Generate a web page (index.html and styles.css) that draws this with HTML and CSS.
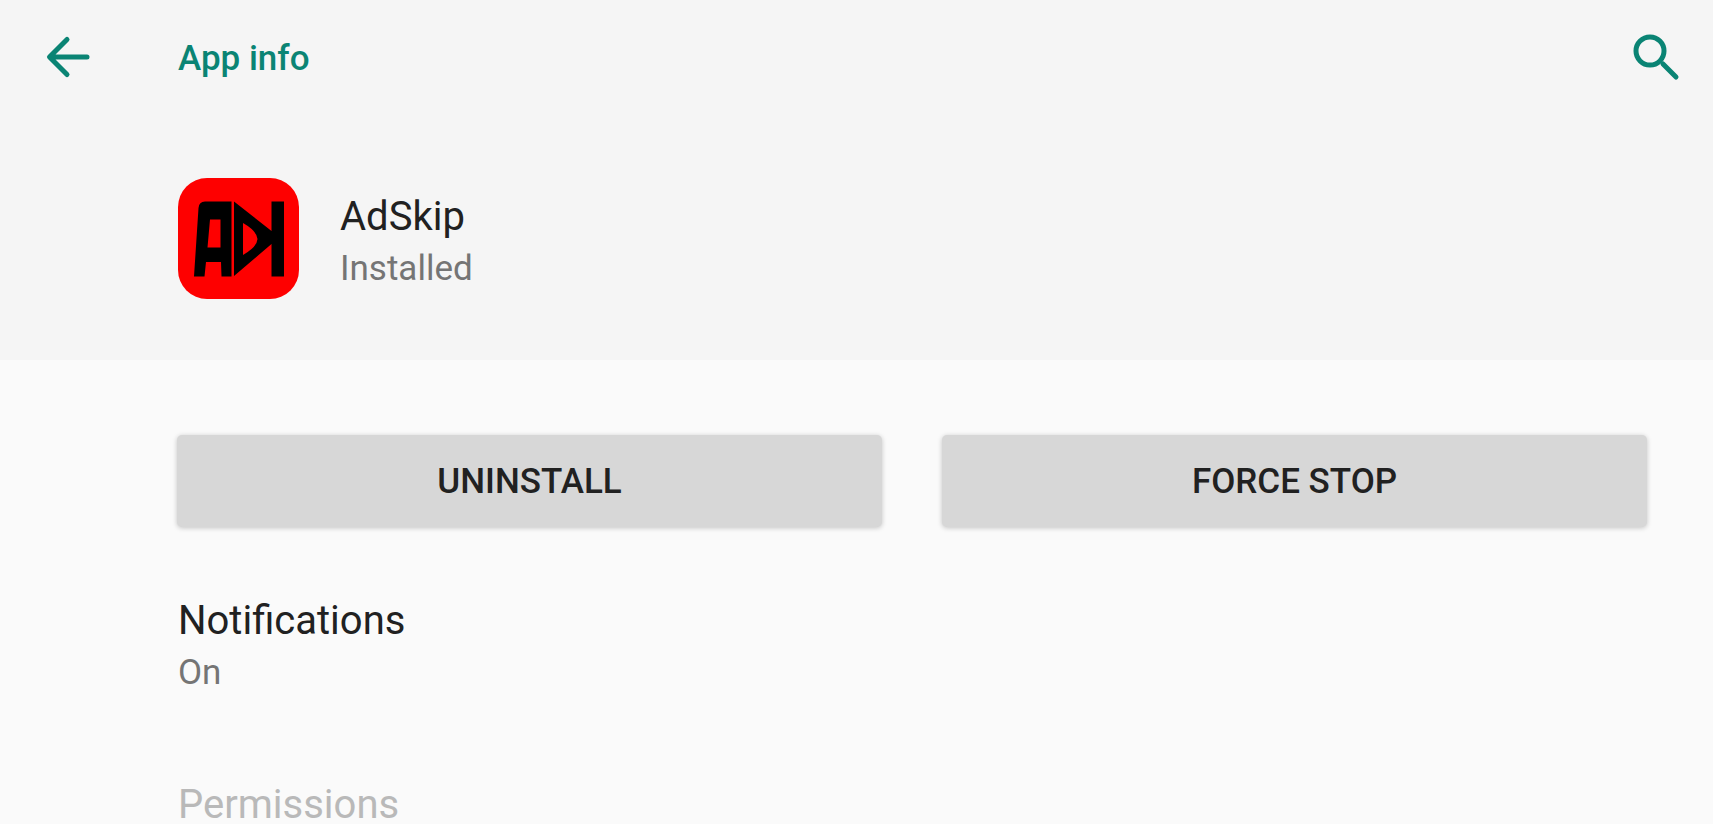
FILE: index.html
```
<!DOCTYPE html>
<html lang="en">
<head>
    <meta charset="UTF-8">
    <meta name="viewport" content="width=device-width, initial-scale=1">
    <title>App info</title>
    <link rel="stylesheet" href="styles.css">
</head>
<body>
<header class="header">
    <div class="toolbar">
        <button class="icon-btn back" type="button" aria-label="Back">
            <svg width="48" height="48" viewBox="0 0 48 48">
                <path d="M23 5.500L5.500 23L23 40.500M6 23H43" />
            </svg>
        </button>
        <h1 class="toolbar-title">App info</h1>
        <button class="icon-btn search" type="button" aria-label="Search">
            <svg width="48" height="48" viewBox="0 0 48 48">
                <circle cx="17" cy="17" r="14" />
                <path d="M30 30L43 43" />
            </svg>
        </button>
    </div>
    <div class="app">
        <svg class="app-logo" viewBox="0 0 121 121" role="img" aria-label="AdSkip logo">
            <rect width="121" height="121" rx="29" fill="#fe0000" />
            <path fill="#000" fill-rule="evenodd" d="M27 23.500H53.500V98.500H43.500L43 84H28L26.500 98.500H16L20.500 30Q21 23.500 27 23.500ZM32 41.500L29.500 69.500H42.500V41.500Z" />
            <path fill="#000" fill-rule="evenodd" d="M56 23.500L93.500 53V23.500H106V98.500H93.500V66L56 98ZM65 45V77Q79 69 79.500 61Q79 53 65 45Z" />
        </svg>
        <div class="app-text">
            <h2 class="title">AdSkip</h2>
            <p class="summary">Installed</p>
        </div>
    </div>
</header>
<main class="content">
    <div class="actions">
        <button class="action" type="button">UNINSTALL</button>
        <button class="action" type="button">FORCE STOP</button>
    </div>
    <ul class="prefs">
        <li class="pref">
            <h3 class="title">Notifications</h3>
            <p class="summary">On</p>
        </li>
        <li class="pref disabled">
            <h3 class="title">Permissions</h3>
        </li>
    </ul>
</main>
</body>
</html>
```
FILE: styles.css
```
*{
    margin: 0;
    padding: 0;
    box-sizing: border-box;
}
body{
    height: 100vh;
    overflow: hidden;
    background-color: #fafafa;
    color: #212121;
    font-family: Roboto, "Liberation Sans", sans-serif;
}
button{
    border: none;
    font-family: inherit;
    cursor: pointer;
}
.header{
    background-color: #f5f5f5;
    padding-bottom: 61px;
}
.toolbar{
    display: grid;
    grid-template-columns: 134px 1fr auto;
    align-items: center;
    height: 116px;
    padding: 0 32px 0 44px;
}
.icon-btn{
    width: 48px;
    height: 48px;
    background: none;
}
.icon-btn svg{
    display: block;
    fill: none;
    stroke: #0a8474;
    stroke-width: 5;
    stroke-linecap: round;
    stroke-linejoin: round;
}
.toolbar-title{
    padding-top: 2px;
    color: #0a8474;
    font-size: 35px;
    font-weight: 500;
    line-height: 48px;
}
.app{
    display: flex;
    align-items: center;
    gap: 41px;
    padding: 62px 66px 0 178px;
}
.app-logo{
    width: 121px;
    height: 121px;
}
.app-text{
    padding-top: 8px;
}
.title{
    font-size: 40px;
    font-weight: 400;
    line-height: 48px;
}
.summary{
    margin-top: 4px;
    color: #757575;
    font-size: 35px;
    line-height: 48px;
}
.actions{
    display: grid;
    grid-template-columns: 1fr 1fr;
    gap: 60px;
    padding: 75px 66px 28px 177px;
}
.action{
    height: 92px;
    border-radius: 5px;
    background-color: #d7d7d7;
    box-shadow: 0 1px 5px rgba(0, 0, 0, 0.22);
    color: #212121;
    font-size: 35px;
    font-weight: 500;
}
.prefs{
    list-style: none;
}
.pref{
    padding: 42px 66px 42px 178px;
}
.disabled .title{
    color: #b9b9b9;
}
```
